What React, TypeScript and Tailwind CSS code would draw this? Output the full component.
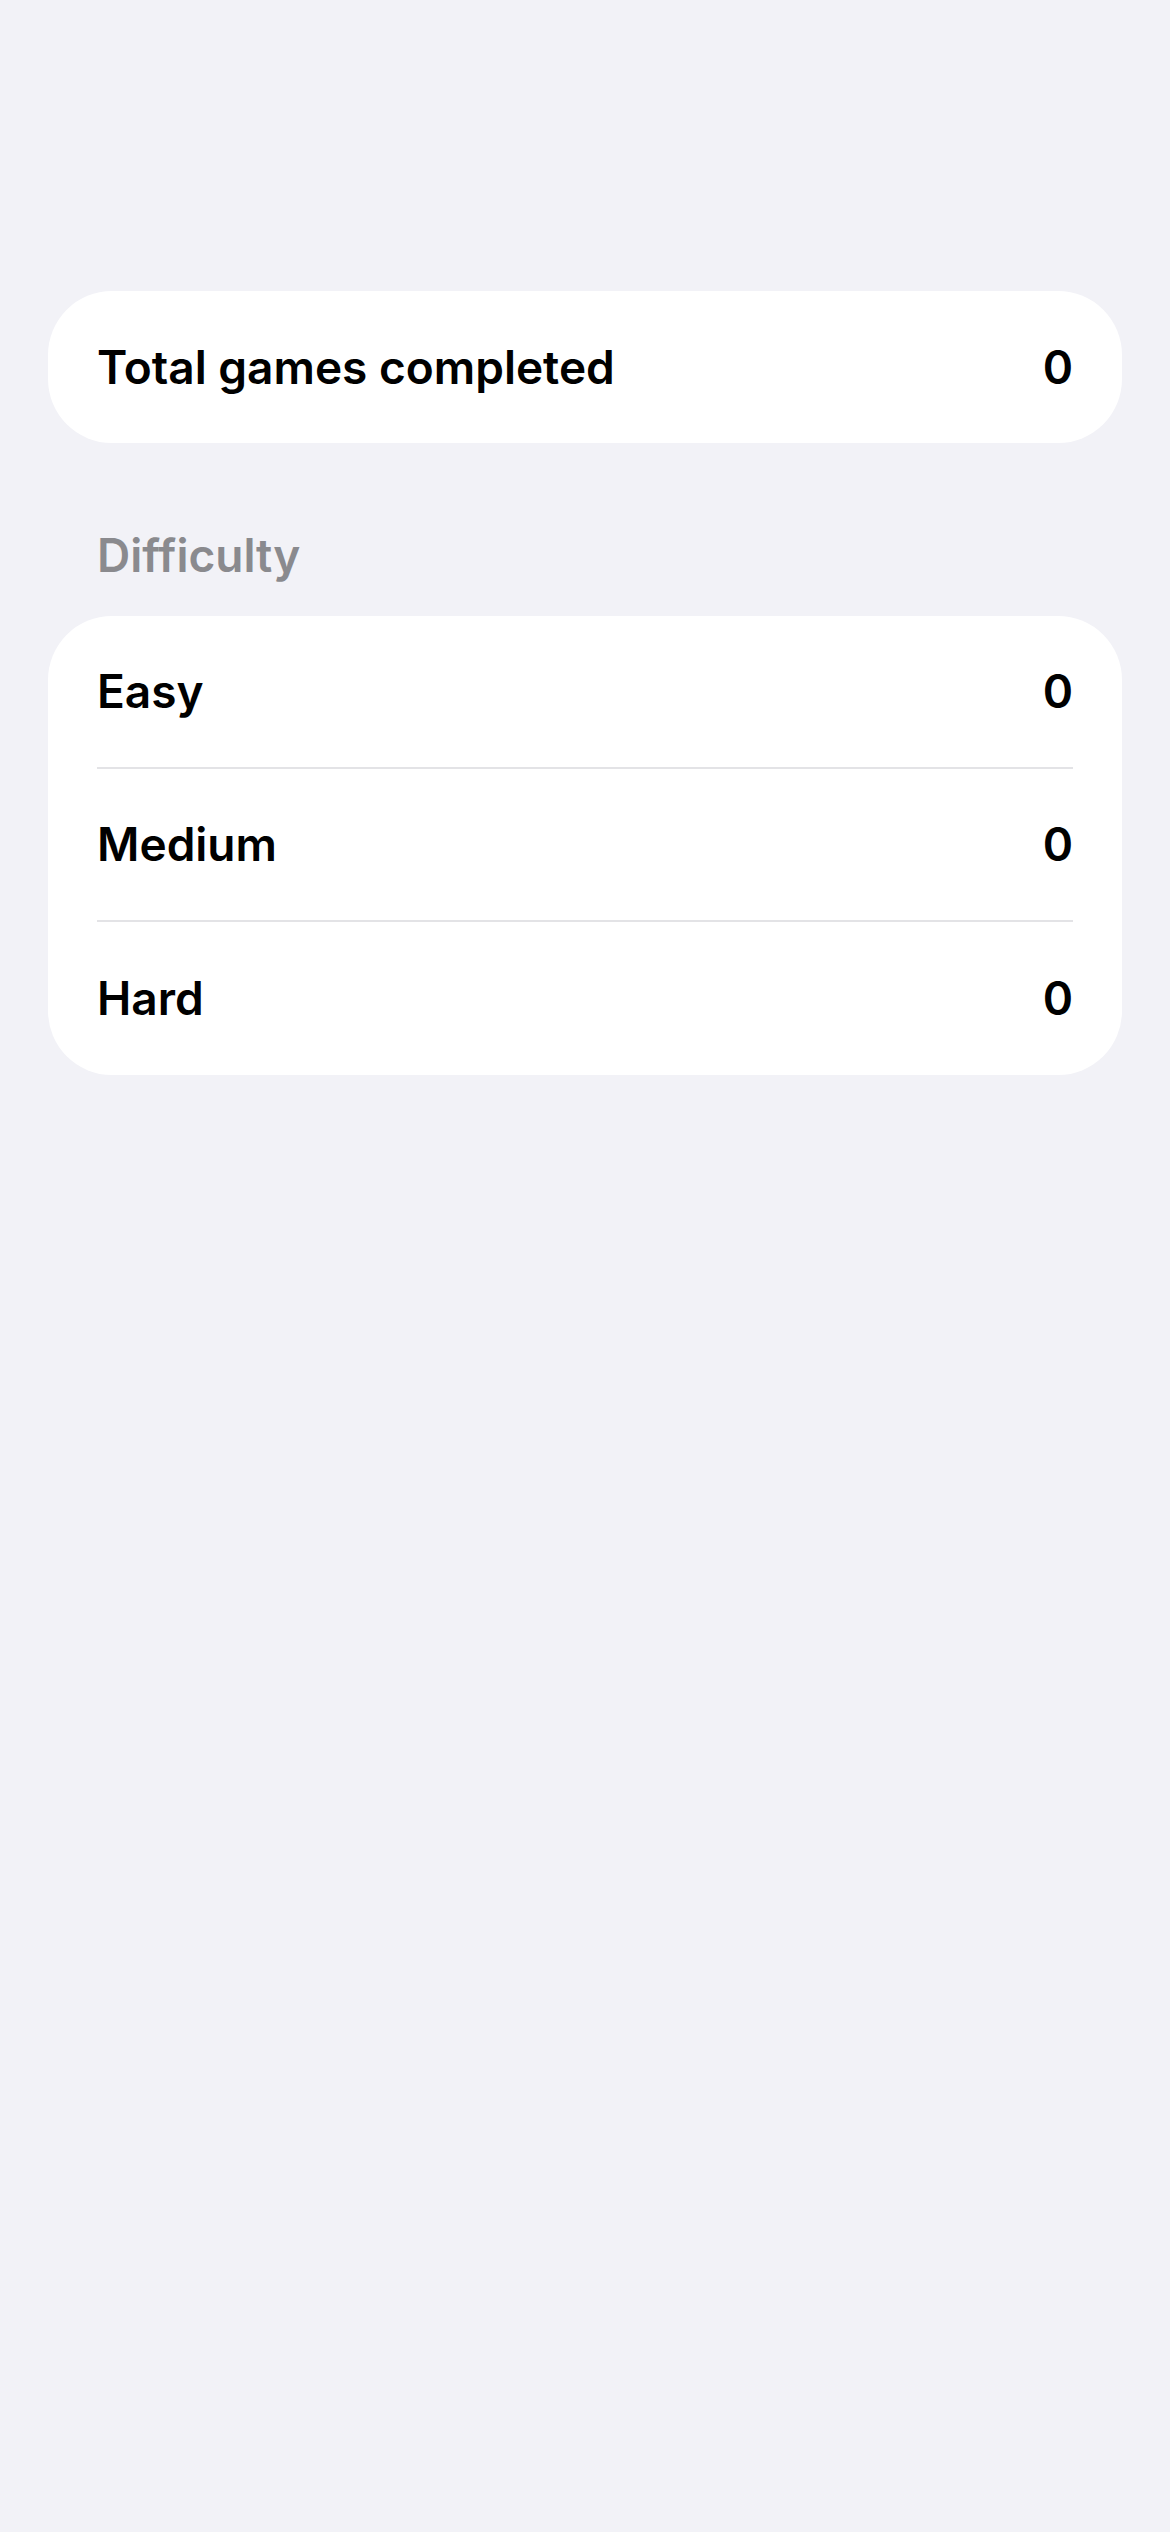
export default function App() {
  const rows = [
    { label: "Easy", value: 0 },
    { label: "Medium", value: 0 },
    { label: "Hard", value: 0 },
  ];

  return (
    <div className="min-h-[2532px] w-[1170px] bg-[#f2f2f7] px-12 pt-[291px] font-['Inter',sans-serif] text-black">
      <div className="flex h-[152px] items-center justify-between rounded-[64px] bg-white px-[49px] text-[46px] font-semibold">
        <span>Total games completed</span>
        <span>0</span>
      </div>

      <h2 className="mt-[84px] px-[49px] text-[46px] font-semibold leading-[56px] text-[#8a8a8e]">Difficulty</h2>

      <div className="mt-[33px] rounded-[64px] bg-white px-[49px]">
        {rows.map((r, i) => (
          <div
            key={r.label}
            className={`flex h-[153px] items-center justify-between text-[46px] font-semibold ${
              i < rows.length - 1 ? "border-b-2 border-[#e3e3e6]" : ""
            }`}
          >
            <span>{r.label}</span>
            <span>{r.value}</span>
          </div>
        ))}
      </div>
    </div>
  );
}
